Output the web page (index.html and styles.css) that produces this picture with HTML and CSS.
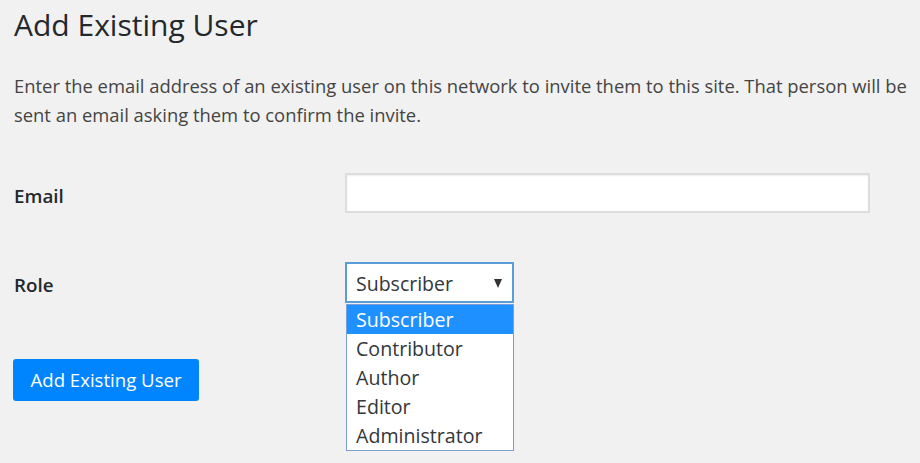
FILE: index.html
```html
<!DOCTYPE html>
<html lang="en">
<head>
<meta charset="utf-8">
<title>Add Existing User</title>
<link rel="stylesheet" href="styles.css">
</head>
<body>
<div class="wrap">
  <h1 class="title">Add Existing User</h1>
  <p class="desc">Enter the email address of an existing user on this network to invite them to this site. That person will be sent an email asking them to confirm the invite.</p>
  <div class="form-table">
    <div class="row row-email">
      <label class="label">Email</label>
      <div class="field"><div class="text-input"></div></div>
    </div>
    <div class="row row-role">
      <label class="label">Role</label>
      <div class="field field-select">
        <div class="select">
          <span class="select-value">Subscriber</span>
          <span class="arrow"></span>
        </div>
        <ul class="dropdown">
          <li class="option selected">Subscriber</li>
          <li class="option">Contributor</li>
          <li class="option">Author</li>
          <li class="option">Editor</li>
          <li class="option">Administrator</li>
        </ul>
      </div>
    </div>
  </div>
  <button class="button">Add Existing User</button>
</div>
</body>
</html>
```

FILE: styles.css
```css
html, body {
  margin: 0;
  padding: 0;
  background: #f1f1f1;
}
body {
  font-family: "Open Sans", "Noto Sans", sans-serif;
  color: #444;
  width: 920px;
  height: 463px;
  overflow: hidden;
}
.wrap {
  padding: 0 0 0 14px;
}
.title {
  margin: 5px 0 0 0;
  font-size: 30px;
  line-height: 40px;
  font-weight: 400;
  color: #23282d;
}
.desc {
  margin: 26px 0 0 0;
  font-size: 18.4px;
  line-height: 29px;
  color: #444;
  max-width: 906px;
}
.form-table {
  display: flex;
  flex-direction: column;
}
.row {
  display: flex;
  align-items: flex-start;
}
.row-email {
  margin-top: 44px;
}
.row-role {
  margin-top: 49px;
}
.label {
  width: 331px;
  flex: none;
  padding-top: 9px;
  font-size: 18.8px;
  line-height: 29px;
  font-weight: 600;
  color: #23282d;
}
.field {
  position: relative;
}
.text-input {
  width: 521px;
  height: 36px;
  background: #fff;
  border: 2px solid #dddddd;
  box-shadow: inset 0 1px 2px rgba(0,0,0,0.07);
}
.select {
  box-sizing: border-box;
  width: 169px;
  height: 41px;
  background: #fff;
  border: 2px solid #5b9dd9;
  display: flex;
  align-items: center;
  justify-content: space-between;
  padding: 0 10px 0 9px;
  font-size: 19.5px;
  color: #32373c;
}
.select-value {
  line-height: 29px;
  padding-top: 2px;
}
.arrow {
  width: 0;
  height: 0;
  border-left: 4.5px solid transparent;
  border-right: 4.5px solid transparent;
  border-top: 9px solid #333;
  margin-top: 2px;
}
.dropdown {
  position: absolute;
  top: 42px;
  left: 1px;
  margin: 0;
  padding: 0;
  list-style: none;
  width: 166px;
  background: #fff;
  border: 1px solid #7b9ed9;
  z-index: 2;
}
.option {
  height: 29px;
  line-height: 30px;
  padding-left: 9px;
  font-size: 19.6px;
  color: #32373c;
  white-space: nowrap;
}
.option.selected {
  background: #1e90ff;
  color: #fff;
}
.button {
  margin-top: 56px;
  margin-left: -1px;
  height: 42px;
  padding: 0 17px 0 17.5px;
  background: #0085ff;
  border: none;
  border-radius: 3px;
  color: #fff;
  font-family: "Open Sans", "Noto Sans", sans-serif;
  font-size: 18.6px;
  line-height: 42px;
  cursor: pointer;
}
```
